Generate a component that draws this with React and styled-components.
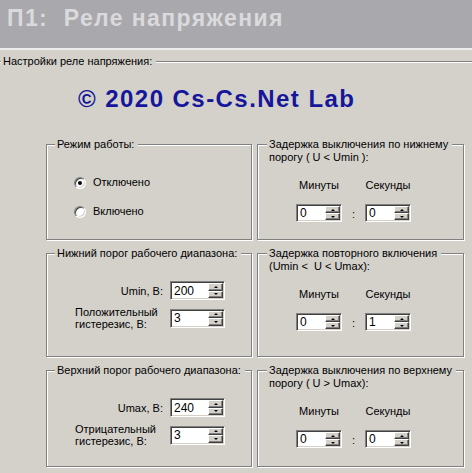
import React from 'react';
import styled, { createGlobalStyle } from 'styled-components';

const BG = '#d4d1cb';

const GlobalStyle = createGlobalStyle`
  *, *::before, *::after { box-sizing: border-box; }
  html, body { margin: 0; padding: 0; background: ${BG}; overflow: hidden; }
  body { font-family: "Liberation Sans", Arial, sans-serif; font-size: 11px; color: #000; }
`;

const Page = styled.div`
  width: 472px;
  height: 473px;
  overflow: hidden;
  background: ${BG};
`;

const Header = styled.header`
  height: 50px;
  background: #a9a8ac;
  border-bottom: 2px solid #ececec;
`;

const Title = styled.h1`
  margin: 0;
  padding: 6px 0 0 7px;
  font: bold 23px/24px "Liberation Sans", Arial, sans-serif;
  letter-spacing: 1.4px;
  color: #dadadc;
  white-space: pre;
`;

const Frame = styled.section`
  position: relative;
  margin: 11px -20px 0 -6px;
  border: 1px solid #808080;
  box-shadow: inset 1px 1px 0 #fff;
  padding: 25px 0 40px 0;
`;

const Legend = styled.span`
  position: absolute;
  top: -7px;
  left: ${p => p.$left}px;
  padding: 0 4px 0 2px;
  background: ${BG};
  line-height: 13px;
  white-space: pre;
`;

const Copyright = styled.div`
  margin-left: 83px;
  font: bold 24px/24px "Liberation Sans", Arial, sans-serif;
  letter-spacing: 1.45px;
  color: #15169a;
`;

const Grid = styled.div`
  display: grid;
  grid-template-columns: 206px 207px;
  grid-template-rows: 96px 104px 97px;
  column-gap: 5px;
  row-gap: 13px;
  margin: 33px 0 0 51px;
`;

const Group = styled.div`
  position: relative;
  border: 1px solid #808080;
  box-shadow: inset 1px 1px 0 #fff, 1px 1px 0 #fff;
`;

const RadioList = styled.div`
  display: flex;
  flex-direction: column;
  gap: 16px;
  padding: 31px 0 0 27px;
`;

const RadioRow = styled.label`
  display: flex;
  align-items: center;
  gap: 7px;
  height: 13px;
  line-height: 13px;
`;

const RadioCircle = styled.span`
  flex: none;
  width: 12px;
  height: 12px;
  border-radius: 50%;
  background: #fff;
  border: 1px solid;
  border-color: #808080 #fff #fff #808080;
  box-shadow: inset 1px 1px 0 #404040, inset -1px -1px 0 #d4d0c8;
  display: flex;
  align-items: center;
  justify-content: center;
`;

const RadioDot = styled.span`
  width: 4px;
  height: 4px;
  border-radius: 50%;
  background: #000;
`;

const FieldGrid = styled.div`
  display: grid;
  grid-template-columns: 88px 55px;
  column-gap: 7px;
  row-gap: 6px;
  align-items: center;
  padding: 27px 0 0 28px;
`;

const FieldLabel = styled.span`
  justify-self: ${p => (p.$align === 'end' ? 'end' : 'start')};
  line-height: 12px;
  white-space: pre;
`;

const TimerGrid = styled.div`
  display: grid;
  grid-template-columns: 46px 23px 46px;
  row-gap: 12px;
  align-items: center;
  padding: 34px 0 0 38px;
`;

const ColHead = styled.span`
  text-align: center;
  line-height: 13px;
  white-space: nowrap;
`;

const Colon = styled.span`
  text-align: center;
  line-height: 13px;
  padding-top: 2px;
`;

const SpinBox = styled.div`
  display: flex;
  height: ${p => p.$h}px;
  background: #fff;
  border: 1px solid;
  border-color: #808080 #fff #fff #808080;
  box-shadow: inset 1px 1px 0 #404040, inset -1px -1px 0 #d4d0c8;
  padding: 1px;
`;

const SpinValue = styled.span`
  flex: 1;
  display: flex;
  align-items: center;
  padding-left: 2px;
  font-size: 12px;
`;

const SpinButtons = styled.div`
  display: flex;
  flex-direction: column;
  width: 15px;
`;

const SpinButton = styled.div`
  flex: 1;
  background: #d4d0c8;
  border: 1px solid;
  border-color: #fff #404040 #404040 #fff;
  box-shadow: inset -1px -1px 0 #808080;
  display: flex;
  align-items: center;
  justify-content: center;
`;

const Arrow = styled.span`
  width: 0;
  height: 0;
  border-left: 2px solid transparent;
  border-right: 2px solid transparent;
  ${p => (p.$down ? 'border-top: 2px solid #000;' : 'border-bottom: 2px solid #000;')}
`;

function Spin({ value, h = 18 }) {
  return (
    <SpinBox $h={h}>
      <SpinValue>{value}</SpinValue>
      <SpinButtons>
        <SpinButton><Arrow /></SpinButton>
        <SpinButton><Arrow $down /></SpinButton>
      </SpinButtons>
    </SpinBox>
  );
}

function TimerGroup({ title, min, sec }) {
  return (
    <Group>
      <Legend $left={9}>{title}</Legend>
      <TimerGrid>
        <ColHead>Минуты</ColHead>
        <span />
        <ColHead>Секунды</ColHead>
        <Spin value={min} />
        <Colon>:</Colon>
        <Spin value={sec} />
      </TimerGrid>
    </Group>
  );
}

function ThresholdGroup({ title, label, value, hystLabel, hyst }) {
  return (
    <Group>
      <Legend $left={8}>{title}</Legend>
      <FieldGrid>
        <FieldLabel $align="end">{label}</FieldLabel>
        <Spin value={value} h={19} />
        <FieldLabel>{hystLabel}</FieldLabel>
        <Spin value={hyst} h={19} />
      </FieldGrid>
    </Group>
  );
}

export default function App() {
  return (
    <Page>
      <GlobalStyle />
      <Header>
        <Title>{'П1:  Реле напряжения'}</Title>
      </Header>
      <Frame>
        <Legend $left={6}>Настройки реле напряжения:</Legend>
        <Copyright>© 2020 Cs-Cs.Net Lab</Copyright>
        <Grid>
          <Group>
            <Legend $left={8}>Режим работы:</Legend>
            <RadioList>
              <RadioRow>
                <RadioCircle><RadioDot /></RadioCircle>
                Отключено
              </RadioRow>
              <RadioRow>
                <RadioCircle />
                Включено
              </RadioRow>
            </RadioList>
          </Group>
          <TimerGroup title={'Задержка выключения по нижнему\nпорогу ( U < Umin ):'} min="0" sec="0" />
          <ThresholdGroup
            title="Нижний порог рабочего диапазона:"
            label="Umin, B:"
            value="200"
            hystLabel={'Положительный\nгистерезис, В:'}
            hyst="3"
          />
          <TimerGroup title={'Задержка повторного включения\n(Umin <  U < Umax):'} min="0" sec="1" />
          <ThresholdGroup
            title="Верхний порог рабочего диапазона:"
            label="Umax, B:"
            value="240"
            hystLabel={'Отрицательный\nгистерезис, В:'}
            hyst="3"
          />
          <TimerGroup title={'Задержка выключения по верхнему\nпорогу ( U > Umax):'} min="0" sec="0" />
        </Grid>
      </Frame>
    </Page>
  );
}
